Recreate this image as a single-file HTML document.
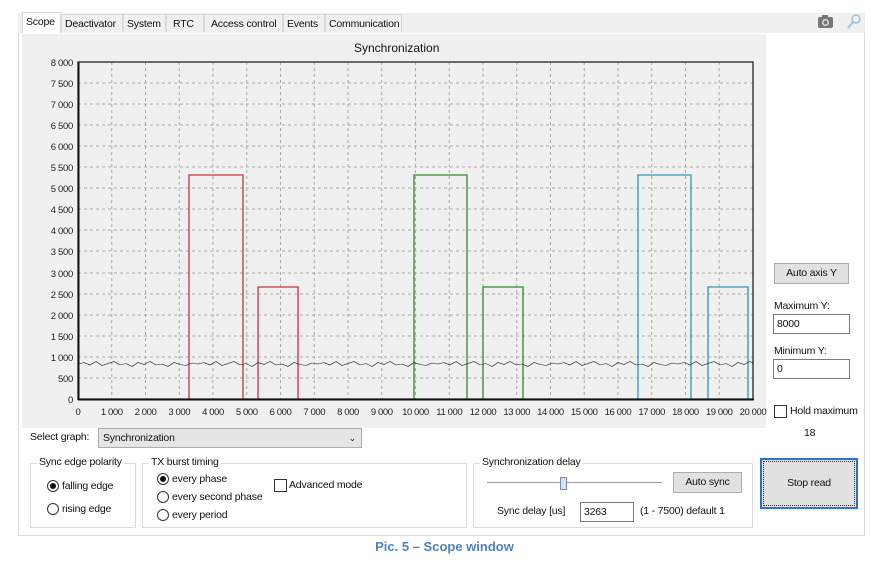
<!DOCTYPE html>
<html><head><meta charset="utf-8"><style>
*{margin:0;padding:0;box-sizing:border-box}
body{width:889px;height:562px;background:#fff;font-family:"Liberation Sans",sans-serif;font-size:10.5px;letter-spacing:-0.2px;color:#111;position:relative;overflow:hidden}
.a{position:absolute;white-space:nowrap}
.tab{position:absolute;top:14px;height:18px;line-height:18px;border:1px solid #d9d9d9;border-bottom:none;background:#f0f0f0;padding:0 3px;font-size:10.5px;white-space:nowrap;overflow:hidden}
.btn{position:absolute;background:#e1e1e1;border:1px solid #adadad;text-align:center}
.inp{position:absolute;background:#fff;border:1px solid #7a7a7a;padding-left:3px}
.grp{position:absolute;border:1px solid #dcdcdc}
.grp span{position:absolute;top:-8px;left:6px;background:#fff;padding:0 2px;white-space:nowrap}
.rad{position:absolute;width:12px;height:12px;border:1px solid #333;border-radius:50%;background:#fff}
.rad.on::after{content:"";position:absolute;left:2px;top:2px;width:6px;height:6px;border-radius:50%;background:#111}
.chk{position:absolute;width:13px;height:13px;border:1px solid #333;background:#fff}
</style></head><body>
<div class="a" style="left:18px;top:32px;width:847px;height:504px;border:1px solid #dcdcdc;background:#fff"></div>
<div class="a" style="left:18px;top:13px;width:847px;height:20px;background:#f0f0f0"></div>
<div class="a" style="left:22px;top:34px;width:744px;height:394px;background:#f0f0f0"></div>
<div class="tab" style="left:22px;top:12px;height:21px;background:#fff;width:39px">Scope</div>
<div class="tab" style="left:61px;width:62px">Deactivator</div>
<div class="tab" style="left:123px;width:43px">System</div>
<div class="tab" style="left:166px;width:38px;padding-left:6px">RTC</div>
<div class="tab" style="left:204px;width:79px;padding-left:6px">Access control</div>
<div class="tab" style="left:283px;width:42px">Events</div>
<div class="tab" style="left:325px;width:77px">Communication</div>
<svg class="a" style="left:816px;top:14px" width="20" height="16"><rect x="2" y="3" width="15" height="11" rx="2" fill="#777"/><rect x="6" y="1" width="6" height="3" fill="#777"/><circle cx="9.5" cy="8.5" r="3.5" fill="#ddd"/><circle cx="9.5" cy="8.5" r="2" fill="#777"/></svg>
<svg class="a" style="left:846px;top:13px" width="16" height="18"><circle cx="10" cy="6" r="4" fill="none" stroke="#9cc3e6" stroke-width="1.5"/><line x1="7" y1="9" x2="2" y2="15" stroke="#9cc3e6" stroke-width="2"/></svg>
<div class="a" style="left:354px;top:41px;font-size:12px;letter-spacing:0">Synchronization</div>
<svg class="a" style="left:0;top:0" width="889" height="430">
<g stroke="#aaa" stroke-dasharray="3,3" stroke-width="1">
<line x1="111.75" y1="62" x2="111.75" y2="399"/><line x1="145.5" y1="62" x2="145.5" y2="399"/><line x1="179.25" y1="62" x2="179.25" y2="399"/><line x1="213" y1="62" x2="213" y2="399"/><line x1="246.75" y1="62" x2="246.75" y2="399"/><line x1="280.5" y1="62" x2="280.5" y2="399"/><line x1="314.25" y1="62" x2="314.25" y2="399"/><line x1="348" y1="62" x2="348" y2="399"/><line x1="381.75" y1="62" x2="381.75" y2="399"/><line x1="415.5" y1="62" x2="415.5" y2="399"/><line x1="449.25" y1="62" x2="449.25" y2="399"/><line x1="483" y1="62" x2="483" y2="399"/><line x1="516.75" y1="62" x2="516.75" y2="399"/><line x1="550.5" y1="62" x2="550.5" y2="399"/><line x1="584.25" y1="62" x2="584.25" y2="399"/><line x1="618" y1="62" x2="618" y2="399"/><line x1="651.75" y1="62" x2="651.75" y2="399"/><line x1="685.5" y1="62" x2="685.5" y2="399"/><line x1="719.25" y1="62" x2="719.25" y2="399"/>
<line x1="78" y1="83" x2="753" y2="83"/><line x1="78" y1="104" x2="753" y2="104"/><line x1="78" y1="125" x2="753" y2="125"/><line x1="78" y1="146" x2="753" y2="146"/><line x1="78" y1="167" x2="753" y2="167"/><line x1="78" y1="188" x2="753" y2="188"/><line x1="78" y1="209" x2="753" y2="209"/><line x1="78" y1="230" x2="753" y2="230"/><line x1="78" y1="251" x2="753" y2="251"/><line x1="78" y1="273" x2="753" y2="273"/><line x1="78" y1="294" x2="753" y2="294"/><line x1="78" y1="315" x2="753" y2="315"/><line x1="78" y1="336" x2="753" y2="336"/><line x1="78" y1="357" x2="753" y2="357"/><line x1="78" y1="378" x2="753" y2="378"/>
</g>
<g fill="none" stroke-width="1.3">
<polyline stroke="#c8323c" points="189,399 189,175 243,175 243,399"/>
<polyline stroke="#c8323c" points="258,399 258,287 298,287 298,399"/>
<polyline stroke="#2e8b2e" points="414,399 414,175 467,175 467,399"/>
<polyline stroke="#2e8b2e" points="483,399 483,287 523,287 523,399"/>
<polyline stroke="#2a9bb8" points="638,399 638,175 691,175 691,399"/>
<polyline stroke="#2a9bb8" points="708,399 708,287 748,287 748,399"/>
</g>
<clipPath id="c"><rect x="78" y="60" width="675" height="340"/></clipPath>
<g clip-path="url(#c)"><path transform="translate(0,182) scale(1,0.5)" fill="none" stroke="#222" stroke-width="1" d="M78 364 l6 -3 l6 5 l6 -7 l6 8 l6 -4 l6 -4 l6 7 l6 -3 l6 6 l6 -8 l6 4 l6 -6 l6 7 l6 -2 l6 5 l6 -8 l6 4 l6 2 l6 -5 l6 2 l6 -3 l6 5 l6 -7 l6 8 l6 -4 l6 -4 l6 7 l6 -3 l6 6 l6 -8 l6 4 l6 -6 l6 7 l6 -2 l6 5 l6 -8 l6 4 l6 2 l6 -5 l6 2 l6 -3 l6 5 l6 -7 l6 8 l6 -4 l6 -4 l6 7 l6 -3 l6 6 l6 -8 l6 4 l6 -6 l6 7 l6 -2 l6 5 l6 -8 l6 4 l6 2 l6 -5 l6 2 l6 -3 l6 5 l6 -7 l6 8 l6 -4 l6 -4 l6 7 l6 -3 l6 6 l6 -8 l6 4 l6 -6 l6 7 l6 -2 l6 5 l6 -8 l6 4 l6 2 l6 -5 l6 2 l6 -3 l6 5 l6 -7 l6 8 l6 -4 l6 -4 l6 7 l6 -3 l6 6 l6 -8 l6 4 l6 -6 l6 7 l6 -2 l6 5 l6 -8 l6 4 l6 2 l6 -5 l6 2 l6 -3 l6 5 l6 -7 l6 8 l6 -4 l6 -4 l6 7 l6 -3 l6 6 l6 -8 l6 4 l6 -6 l6 7 l6 -2 l6 5 l6 -8 l6 4 l6 2 l6 -5 l6 2"/></g>
<rect x="78" y="62" width="675" height="337" fill="none" stroke="#111" stroke-width="1.2"/>
<line x1="78.5" y1="62" x2="78.5" y2="400" stroke="#111" stroke-width="2"/>
<line x1="78" y1="399.5" x2="754" y2="399.5" stroke="#111" stroke-width="2"/>
<g font-size="9.5" fill="#222" text-anchor="end" font-family="Liberation Sans, sans-serif" letter-spacing="-0.3">
<text x="73" y="66">8 000</text><text x="73" y="87">7 500</text><text x="73" y="108">7 000</text><text x="73" y="129">6 500</text><text x="73" y="150">6 000</text><text x="73" y="171">5 500</text><text x="73" y="192">5 000</text><text x="73" y="213">4 500</text><text x="73" y="234">4 000</text><text x="73" y="255">3 500</text><text x="73" y="277">3 000</text><text x="73" y="298">2 500</text><text x="73" y="319">2 000</text><text x="73" y="340">1 500</text><text x="73" y="361">1 000</text><text x="73" y="382">500</text><text x="73" y="403">0</text>
</g>
<g font-size="9.5" fill="#222" text-anchor="middle" font-family="Liberation Sans, sans-serif" letter-spacing="-0.4">
<text x="78" y="415">0</text><text x="111.75" y="415">1 000</text><text x="145.5" y="415">2 000</text><text x="179.25" y="415">3 000</text><text x="213" y="415">4 000</text><text x="246.75" y="415">5 000</text><text x="280.5" y="415">6 000</text><text x="314.25" y="415">7 000</text><text x="348" y="415">8 000</text><text x="381.75" y="415">9 000</text><text x="415.5" y="415">10 000</text><text x="449.25" y="415">11 000</text><text x="483" y="415">12 000</text><text x="516.75" y="415">13 000</text><text x="550.5" y="415">14 000</text><text x="584.25" y="415">15 000</text><text x="618" y="415">16 000</text><text x="651.75" y="415">17 000</text><text x="685.5" y="415">18 000</text><text x="719.25" y="415">19 000</text><text x="753" y="415">20 000</text>
</g>
</svg>
<div class="btn" style="left:774px;top:263px;width:75px;height:21px;line-height:19px">Auto axis Y</div>
<div class="a" style="left:774px;top:300px">Maximum Y:</div>
<div class="inp" style="left:773px;top:314px;width:77px;height:20px;line-height:18px">8000</div>
<div class="a" style="left:774px;top:345px">Minimum Y:</div>
<div class="inp" style="left:773px;top:359px;width:77px;height:20px;line-height:18px">0</div>
<div class="chk" style="left:774px;top:405px"></div>
<div class="a" style="left:790px;top:405px">Hold maximum</div>
<div class="a" style="left:804px;top:427px">18</div>
<div class="a" style="left:30px;top:431px">Select graph:</div>
<div class="a" style="left:98px;top:428px;width:264px;height:20px;background:#e5e5e5;border:1px solid #adadad;line-height:18px;padding-left:4px">Synchronization<span style="position:absolute;right:5px;top:0;font-size:9px">&#8964;</span></div>
<div class="grp" style="left:30px;top:463px;width:106px;height:65px"><span>Sync edge polarity</span></div>
<div class="rad on" style="left:47px;top:480px"></div><div class="a" style="left:62px;top:480px">falling edge</div>
<div class="rad" style="left:47px;top:503px"></div><div class="a" style="left:62px;top:503px">rising edge</div>
<div class="grp" style="left:142px;top:463px;width:325px;height:65px"><span>TX burst timing</span></div>
<div class="rad on" style="left:157px;top:473px"></div><div class="a" style="left:172px;top:473px">every phase</div>
<div class="rad" style="left:157px;top:491px"></div><div class="a" style="left:172px;top:491px">every second phase</div>
<div class="rad" style="left:157px;top:509px"></div><div class="a" style="left:172px;top:509px">every period</div>
<div class="chk" style="left:274px;top:479px"></div><div class="a" style="left:289px;top:479px">Advanced mode</div>
<div class="grp" style="left:473px;top:463px;width:280px;height:65px"><span>Synchronization delay</span></div>
<div class="a" style="left:487px;top:482px;width:175px;height:1px;background:#999"></div>
<div class="a" style="left:560px;top:477px;width:7px;height:13px;background:#e0e0e0;border:1px solid #6a8fc0"></div>
<div class="btn" style="left:673px;top:472px;width:69px;height:21px;line-height:19px">Auto sync</div>
<div class="a" style="left:497px;top:505px">Sync delay [us]</div>
<div class="inp" style="left:580px;top:502px;width:54px;height:20px;line-height:18px">3263</div>
<div class="a" style="left:640px;top:505px">(1 - 7500) default 1</div>
<div class="a" style="left:760px;top:458px;width:98px;height:51px;background:#e1e1e1;border:2px solid #2f6fcf;outline:1px dotted #333;outline-offset:-4px;text-align:center;line-height:47px">Stop read</div>
<div class="a" style="left:0;top:539px;width:889px;text-align:center;color:#4f81bd;font-weight:bold;font-size:13px;letter-spacing:0">Pic. 5 – Scope window</div>
</body></html>
